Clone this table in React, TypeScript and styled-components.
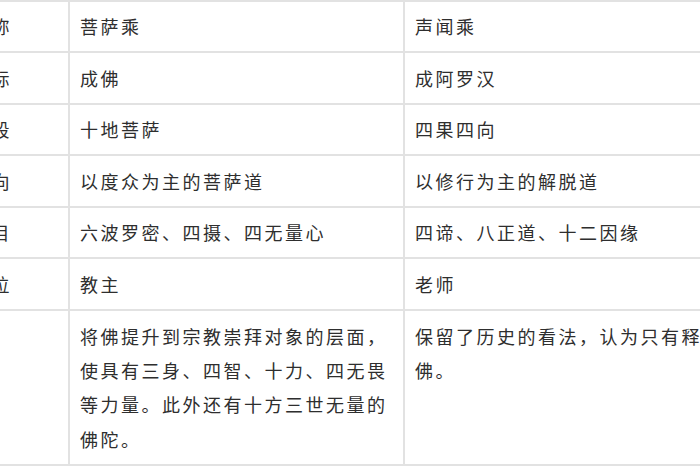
import React from "react";
import styled, { createGlobalStyle } from "styled-components";

const Global = createGlobalStyle`
  html, body { margin: 0; padding: 0; background: #ffffff; }
  body { font-family: "Noto Sans CJK SC", "Noto Sans", sans-serif; }
`;

const Viewport = styled.div`
  width: 700px;
  height: 470px;
  overflow: hidden;
  background: #fff;
`;

const Table = styled.table`
  border-collapse: collapse;
  margin-left: -41px;
  margin-top: -0.5px;
  table-layout: fixed;
  width: 800px;
`;

const Col = styled.col<{ $w: number }>`
  width: ${(p) => p.$w}px;
`;

const Row = styled.tr``;

const Cell = styled.td`
  border: 2px solid #e2e2e2;
  padding: 7.6px 10px 7.6px 10px;
  font-size: 18px;
  letter-spacing: 2.5px;
  line-height: 34.4px;
  color: #2e2e2e;
  vertical-align: top;
  text-align: left;
`;

const rows: [string, string, string][] = [
  ["名称", "菩萨乘", "声闻乘"],
  ["目标", "成佛", "成阿罗汉"],
  ["阶段", "十地菩萨", "四果四向"],
  ["方向", "以度众为主的菩萨道", "以修行为主的解脱道"],
  ["科目", "六波罗密、四摄、四无量心", "四谛、八正道、十二因缘"],
  ["地位", "教主", "老师"],
  [
    "",
    "将佛提升到宗教崇拜对象的层面，使具有三身、四智、十力、四无畏等力量。此外还有十方三世无量的佛陀。",
    "保留了历史的看法，认为只有释迦是佛。",
  ],
];

export default function App() {
  return (
    <Viewport>
      <Global />
      <Table>
        <colgroup>
          <Col $w={109} />
          <Col $w={335} />
          <Col $w={356} />
        </colgroup>
        <tbody>
          {rows.map((r, i) => (
            <Row key={i}>
              <Cell>{r[0]}</Cell>
              <Cell>{r[1]}</Cell>
              <Cell>{r[2]}</Cell>
            </Row>
          ))}
        </tbody>
      </Table>
    </Viewport>
  );
}
